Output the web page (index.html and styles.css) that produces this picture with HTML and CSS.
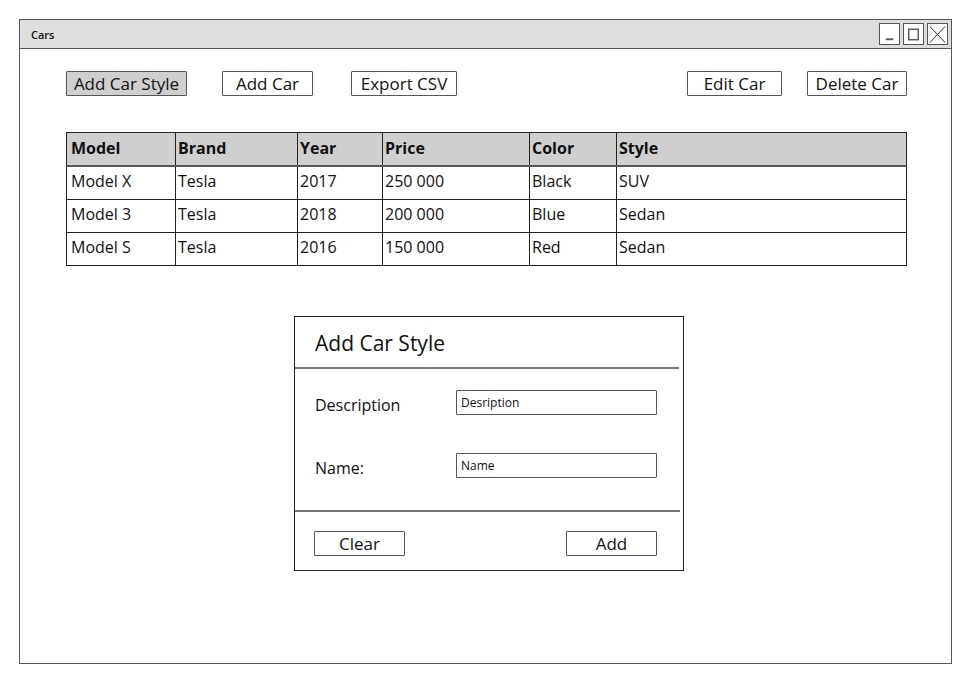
FILE: index.html
```html
<!DOCTYPE html>
<html>
<head>
<meta charset="utf-8">
<title>Cars</title>
<link rel="stylesheet" href="styles.css">
</head>
<body>
<div class="window">
  <div class="titlebar">
    <span class="title">Cars</span>
    <div class="controls">
      <span class="ctl"><svg width="20" height="21" viewBox="0 0 20 21"><line x1="6" y1="15.5" x2="14" y2="15.5" stroke="#555" stroke-width="2"/></svg></span>
      <span class="ctl"><svg width="20" height="21" viewBox="0 0 20 21"><rect x="5" y="5" width="10" height="11" fill="none" stroke="#555" stroke-width="1.5"/></svg></span>
      <span class="ctl"><svg width="20" height="21" viewBox="0 0 20 21"><path d="M2 2 L18 19 M18 2 L2 19" stroke="#222" stroke-width="1"/></svg></span>
    </div>
  </div>
  <div class="content">
    <div class="toolbar">
      <div class="group left">
        <button class="btn active w-style">Add Car Style</button>
        <button class="btn w-add">Add Car</button>
        <button class="btn w-export">Export CSV</button>
      </div>
      <div class="group right">
        <button class="btn w-edit">Edit Car</button>
        <button class="btn w-delete">Delete Car</button>
      </div>
    </div>
    <table class="grid">
      <colgroup>
        <col class="c1"><col class="c2"><col class="c3"><col class="c4"><col class="c5"><col class="c6">
      </colgroup>
      <thead>
        <tr><th>Model</th><th>Brand</th><th>Year</th><th>Price</th><th>Color</th><th>Style</th></tr>
      </thead>
      <tbody>
        <tr><td>Model X</td><td>Tesla</td><td>2017</td><td>250 000</td><td>Black</td><td>SUV</td></tr>
        <tr><td>Model 3</td><td>Tesla</td><td>2018</td><td>200 000</td><td>Blue</td><td>Sedan</td></tr>
        <tr><td>Model S</td><td>Tesla</td><td>2016</td><td>150 000</td><td>Red</td><td>Sedan</td></tr>
      </tbody>
    </table>
    <div class="dialog">
      <div class="dlg-head">Add Car Style</div>
      <div class="dlg-body">
        <div class="field">
          <span class="label">Description</span>
          <span class="input">Desription</span>
        </div>
        <div class="field">
          <span class="label">Name:</span>
          <span class="input">Name</span>
        </div>
      </div>
      <div class="dlg-foot">
        <button class="btn w-dlg">Clear</button>
        <button class="btn w-dlg">Add</button>
      </div>
    </div>
  </div>
</div>
</body>
</html>
```

FILE: styles.css
```css
* { box-sizing: border-box; }
html, body { margin: 0; padding: 0; background: #fff; }
body {
  padding: 19px 0 0 19px;
  font-family: "Open Sans", "DejaVu Sans", sans-serif;
  color: #111;
}
.window {
  width: 933px;
  height: 645px;
  border: 1.5px solid #555;
  display: flex;
  flex-direction: column;
}
.titlebar {
  height: 29px;
  background: #dedede;
  border-bottom: 1.5px solid #555;
  display: flex;
  align-items: center;
  justify-content: space-between;
  padding: 0 3px 0 11px;
}
.title { font-size: 11px; font-weight: 600; }
.controls { display: flex; gap: 3px; }
.ctl {
  width: 21px; height: 22px;
  border: 1.5px solid #555;
  background: #fff;
  display: flex; align-items: center; justify-content: center;
}
.content {
  padding: 22px 44px 0 46px;
  display: flex;
  flex-direction: column;
}
.toolbar {
  display: flex;
  justify-content: space-between;
  height: 25px;
}
.group { display: flex; }
.group.left { gap: 35px; }
.group.left .w-export { margin-left: 3px; }
.group.right { gap: 25px; }
.btn {
  font-family: inherit;
  font-size: 17px;
  color: #111;
  background: #fff;
  border: 1.5px solid #555;
  border-radius: 1px;
  height: 25px;
  padding: 0;
  display: flex; align-items: center; justify-content: center;
}
.btn.active { background: #cfcfcf; }
.w-style { width: 121px; }
.w-add { width: 91px; }
.w-export { width: 106px; }
.w-edit { width: 95px; }
.w-delete { width: 100px; }
.w-dlg { width: 91px; }

.grid {
  margin-top: 36px;
  width: 841px;
  border-collapse: collapse;
  table-layout: fixed;
  font-size: 16px;
}
.grid .c1 { width: 109px; }
.grid .c2 { width: 122px; }
.grid .c3 { width: 85px; }
.grid .c4 { width: 147px; }
.grid .c5 { width: 87px; }
.grid th, .grid td {
  border: 1px solid #222;
  height: 33.25px;
  padding: 0 4px 3px 4px;
  text-align: left;
  line-height: 1;
}
.grid th { padding-bottom: 1px; }
.grid th:not(:first-child), .grid td:not(:first-child) { padding-left: 2px; }
.grid th { background: #cfcfcf; font-weight: 700; }
.grid thead tr { border-bottom: 2px solid #555; }

.dialog {
  margin: 50px 0 0 228px;
  width: 390px;
  height: 255px;
  border: 1px solid #222;
  display: flex;
  flex-direction: column;
}
.dlg-head {
  height: 52px;
  font-size: 21px;
  padding: 12px 0 0 20px;
  border-bottom: 2px solid #777;
  margin-right: 4px;
}
.dlg-body {
  height: 143px;
  border-bottom: 2px solid #777;
  margin-right: 3px;
  padding: 21px 0 0 20px;
  display: flex;
  flex-direction: column;
  gap: 38px;
}
.field { display: flex; align-items: center; height: 25px; }
.label { width: 141px; font-size: 16px; padding-top: 4px; }
.input {
  width: 201px;
  height: 25px;
  border: 1.5px solid #555;
  border-radius: 1px;
  font-size: 12px;
  padding: 3px 0 0 4px;
}
.dlg-foot {
  display: flex;
  justify-content: space-between;
  padding: 19px 26px 0 19px;
}
```
